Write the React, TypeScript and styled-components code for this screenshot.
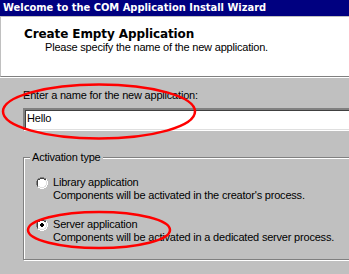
import React from "react";
import styled, { createGlobalStyle } from "styled-components";

const Global = createGlobalStyle`
  html, body { margin: 0; padding: 0; background: #c0c0c0; }
  body { font-family: "Liberation Sans", Arial, sans-serif; font-size: 11px; letter-spacing: -0.2px; color: #000; }
`;

const Frame = styled.div`
  position: relative;
  width: 349px;
  height: 274px;
  overflow: hidden;
  background: #c0c0c0;
  display: flex;
  flex-direction: column;
`;

const TitleBar = styled.div`
  height: 16px;
  flex: none;
  background: #000080;
  color: #fff;
  font-family: "DejaVu Sans Condensed", "DejaVu Sans", sans-serif;
  font-weight: bold;
  font-size: 11px;
  letter-spacing: 0;
  line-height: 16px;
  padding-left: 3px;
  white-space: nowrap;
`;

const Header = styled.div`
  flex: none;
  height: 61px;
  box-sizing: border-box;
  background: #fff;
  border-top: 1px solid #c0c0c0;
  border-left: 1px solid #c0c0c0;
  border-bottom: 1px solid #808080;
  box-shadow: 0 1px 0 #fff;
  display: flex;
  flex-direction: column;
  padding: 11px 0 0 23px;
`;

const HeaderTitle = styled.div`
  font-family: "DejaVu Sans", sans-serif;
  font-weight: bold;
  font-size: 12px;
  letter-spacing: -0.1px;
  line-height: 13px;
`;

const HeaderSub = styled.div`
  padding-left: 21px;
  line-height: 13px;
`;

const Body = styled.div`
  padding: 12px 0 0 23px;
  display: flex;
  flex-direction: column;
`;

const FieldLabel = styled.div`
  line-height: 13px;
  margin-bottom: 6px;
`;

const TextBox = styled.div`
  width: 340px;
  height: 22px;
  box-sizing: border-box;
  background: #fff;
  border-top: 2px solid #808080;
  border-left: 2px solid #808080;
  box-shadow: inset 1px 1px 0 #404040, inset 0 -1px 0 #dfdfdf, 1px 1px 0 #fff;
  padding: 2px 0 0 2px;
  line-height: 13px;
`;

const Group = styled.div`
  position: relative;
  margin-top: 27px;
  width: 340px;
  height: 103px;
  box-sizing: border-box;
  border: 1px solid #808080;
  box-shadow: inset 1px 1px 0 #fff, 1px 1px 0 #fff;
  padding: 18px 0 0 12px;
  display: flex;
  flex-direction: column;
  gap: 16px;
`;

const Legend = styled.div`
  position: absolute;
  top: -7px;
  left: 6px;
  padding: 0 2px;
  background: #c0c0c0;
  line-height: 13px;
`;

const Option = styled.div`
  display: flex;
  align-items: flex-start;
  gap: 5px;
`;

const OptionText = styled.div`
  display: flex;
  flex-direction: column;
  line-height: 13px;
`;

const RadioIcon = styled.svg`
  flex: none;
  width: 12px;
  height: 12px;
  margin-top: 1px;
`;

const Overlay = styled.svg`
  position: absolute;
  left: 0;
  top: 0;
  pointer-events: none;
`;

function Radio({ checked }: { checked?: boolean }) {
  return (
    <RadioIcon viewBox="0 0 12 12">
      <path d="M4 0h4v1h2v1h1v2h1v4h-1v2h-1v1h-2v1h-4v-1h-2v-1h-1v-2h-1v-4h1v-2h1v-1h2z" fill="#fff" />
      <path d="M4 0h4v1h2v1h-2v-1h-4v1h-2v2h-1v4h1v2h-1v-2h-1v-4h1v-2h1v-1h2z" fill="#808080" />
      <path d="M4 1h4v1h2v1h-2v-1h-4v1h-2v1h-0v4h0v1h-1v-1h0v-4h0v-1h1v-1h2z" fill="#404040" />
      <path d="M10 2h1v2h1v4h-1v2h-1v1h-2v1h-4v-1h-2v-1h2v1h4v-1h2v-2h1v-4h-1z" fill="#fff" />
      <path d="M9 3h1v1h1v4h-1v2h-2v1h-4v-1h-2v-1h2v1h4v-1h1v-1h1v-4h-1z" fill="#dfdfdf" />
      {checked && <path d="M5 4h2v1h1v2h-1v1h-2v-1h-1v-2h1z" fill="#000" />}
    </RadioIcon>
  );
}

export default function App() {
  return (
    <>
      <Global />
      <Frame>
        <TitleBar>Welcome to the COM Application Install Wizard</TitleBar>
        <Header>
          <HeaderTitle>Create Empty Application</HeaderTitle>
          <HeaderSub>Please specify the name of the new application.</HeaderSub>
        </Header>
        <Body>
          <FieldLabel>Enter a name for the new application:</FieldLabel>
          <TextBox>Hello</TextBox>
          <Group>
            <Legend>Activation type</Legend>
            <Option>
              <Radio />
              <OptionText>
                <span>Library application</span>
                <span>Components will be activated in the creator's process.</span>
              </OptionText>
            </Option>
            <Option>
              <Radio checked />
              <OptionText>
                <span>Server application</span>
                <span>Components will be activated in a dedicated server process.</span>
              </OptionText>
            </Option>
          </Group>
        </Body>
        <Overlay width="349" height="274" viewBox="0 0 349 274">
          <ellipse cx="99" cy="111.5" rx="96" ry="27" fill="none" stroke="#ff0000" strokeWidth="2.5" />
          <ellipse cx="99" cy="230" rx="71" ry="18" fill="none" stroke="#ff0000" strokeWidth="2.5" />
        </Overlay>
      </Frame>
    </>
  );
}
